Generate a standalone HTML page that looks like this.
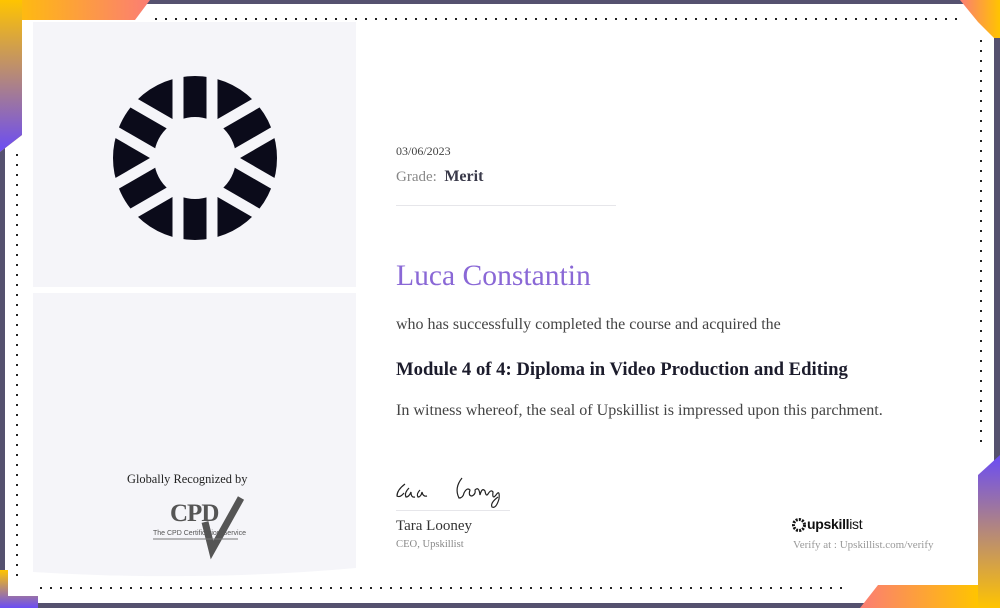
<!DOCTYPE html>
<html><head><meta charset="utf-8"><style>
*{margin:0;padding:0;box-sizing:border-box}
body{width:1000px;height:608px;position:relative;overflow:hidden;background:#fff;font-family:"Liberation Serif",serif}
.a{position:absolute;white-space:nowrap}
.dark{background:#55516f}
</style></head><body>
<div class="a dark" style="left:140px;top:0;width:830px;height:4px"></div>
<div class="a dark" style="left:0;top:140px;width:5px;height:440px"></div>
<div class="a dark" style="left:994px;top:36px;width:6px;height:430px"></div>
<div class="a dark" style="left:36px;top:603px;width:830px;height:5px"></div>
<svg class="a" style="left:0;top:0" width="1000" height="608">
<defs>
<linearGradient id="g1" x1="0" y1="0" x2="0" y2="1"><stop offset="0" stop-color="#ffc400"/><stop offset="1" stop-color="#6a4cf5"/></linearGradient>
<linearGradient id="g2" x1="0" y1="0" x2="1" y2="0"><stop offset="0" stop-color="#ffc400"/><stop offset="1" stop-color="#fb7d74"/></linearGradient>
<linearGradient id="g3" x1="0" y1="0" x2="0" y2="1"><stop offset="0" stop-color="#6a4cf5"/><stop offset="1" stop-color="#ffc400"/></linearGradient>
<linearGradient id="g4" x1="0" y1="0" x2="1" y2="0"><stop offset="0" stop-color="#fb7d74"/><stop offset="1" stop-color="#ffc400"/></linearGradient>
</defs>
<path d="M0 0H150L135 20H22V135L0 152Z" fill="url(#g2)"/>
<path d="M0 0H22V135L0 152Z" fill="url(#g1)"/>
<path d="M960 0H1000V38H994L978 22Z" fill="url(#g4)"/>
<path d="M978 475L1000 455V608H978Z" fill="url(#g3)"/>
<path d="M860 608L878 585H978V608Z" fill="url(#g4)"/>
<path d="M0 570H8V596H38V608H0Z" fill="url(#g1)"/>
<line x1="155" y1="19" x2="958" y2="19" stroke="#222" stroke-width="2" stroke-dasharray="2 8"/>
<line x1="981" y1="40" x2="981" y2="450" stroke="#222" stroke-width="2" stroke-dasharray="2 8"/>
<line x1="17" y1="154" x2="17" y2="576" stroke="#222" stroke-width="2" stroke-dasharray="2 8"/>
<line x1="40" y1="588" x2="845" y2="588" stroke="#222" stroke-width="2" stroke-dasharray="2 8"/>
<rect x="33" y="22" width="323" height="265" fill="#f5f5f9"/>
<path d="M33 293H356V568Q200 582 33 572Z" fill="#f5f5f9"/>
<g transform="translate(195,158)">
<circle r="61.5" fill="none" stroke="#0b0b1a" stroke-width="41"/>
<g stroke="#f5f5f9" stroke-width="11">
<g><line x1="-17" y1="-100" x2="-17" y2="100"/><line x1="17" y1="-100" x2="17" y2="100"/></g>
<g transform="rotate(60)"><line x1="-17" y1="-100" x2="-17" y2="100"/><line x1="17" y1="-100" x2="17" y2="100"/></g>
<g transform="rotate(-60)"><line x1="-17" y1="-100" x2="-17" y2="100"/><line x1="17" y1="-100" x2="17" y2="100"/></g>
</g></g>
<line x1="396" y1="205.5" x2="616" y2="205.5" stroke="#e6e6ea"/>
<line x1="396" y1="510.5" x2="510" y2="510.5" stroke="#e6e6ea"/>
<path d="M405 484q-8 6-8 12q3 2 7-3M409 488q-5 5-3 9q3 0 5-5q0 6 4 5M420 490q-4 4-2 7q3 0 4-5q1 5 5 4" fill="none" stroke="#222" stroke-width="1.2"/>
<path d="M462 478q-8 10-3 20q4 0 5-5q3-6 6-3q-2 6 2 6q4-2 3-6q4-4 5 5q2-8 5-4q1 6 3 3q3-5 5-2q-1 8 3 3q4-6 3 4q-3 10-7 8q-2-4 6-10" fill="none" stroke="#222" stroke-width="1.2"/>
<path d="M205 522L212 550L241 498" fill="none" stroke="#555" stroke-width="7"/>
<line x1="153" y1="539" x2="238" y2="539" stroke="#777"/>
<g transform="translate(799,525)"><circle r="5.5" fill="none" stroke="#111" stroke-width="3" stroke-dasharray="2 1.2"/></g>
</svg>
<div class="a" style="left:127px;top:472px;font-size:12.4px;color:#222">Globally Recognized by</div>
<div class="a" style="left:170px;top:500px;font-size:25px;font-weight:bold;color:#555;letter-spacing:-1px">CPD</div>
<div class="a" style="left:153px;top:530px;font-size:7px;color:#555;font-family:'Liberation Sans',sans-serif">The CPD Certification Service</div>
<div class="a" style="left:396px;top:144px;font-size:12px;color:#444">03/06/2023</div>
<div class="a" style="left:396px;top:168px;font-size:15px;color:#888">Grade:&nbsp; <b style="color:#3a3a4a;font-size:16px">Merit</b></div>
<div class="a" style="left:396px;top:260px;font-size:29.6px;color:#8a68d6">Luca Constantin</div>
<div class="a" style="left:396px;top:316px;font-size:16px;color:#444">who has successfully completed the course and acquired the</div>
<div class="a" style="left:396px;top:359px;font-size:18.7px;font-weight:bold;color:#1c1c2c">Module 4 of 4: Diploma in Video Production and Editing</div>
<div class="a" style="left:396px;top:402px;font-size:16.1px;color:#444">In witness whereof, the seal of Upskillist is impressed upon this parchment.</div>
<div class="a" style="left:396px;top:518px;font-size:15px;color:#333">Tara Looney</div>
<div class="a" style="left:396px;top:539px;font-size:10.6px;color:#888">CEO, Upskillist</div>
<div class="a" style="left:807px;top:516px;font-size:14px;color:#111;font-family:'Liberation Sans',sans-serif;letter-spacing:-0.3px"><b>upskill</b>ist</div>
<div class="a" style="left:793px;top:539px;font-size:11px;color:#999">Verify at : Upskillist.com/verify</div>
</body></html>
